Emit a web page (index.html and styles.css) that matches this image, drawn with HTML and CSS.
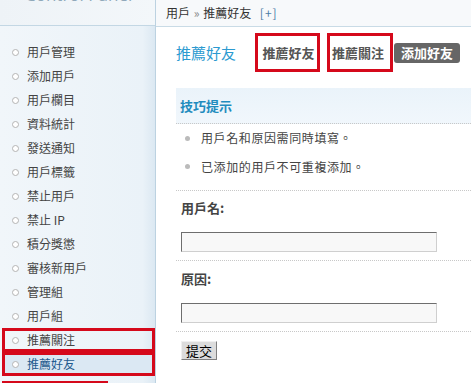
FILE: index.html
```html
<!DOCTYPE html>
<html lang="zh-Hant">
<head>
<meta charset="utf-8">
<title>推薦好友</title>
<link rel="stylesheet" href="styles.css">
</head>
<body>
<div class="page">
  <aside class="sidebar">
    <div class="side-head"><div class="brand">Control Panel</div></div>
    <ul class="nav">
      <li class="nav-item">用戶管理</li>
      <li class="nav-item">添加用戶</li>
      <li class="nav-item">用戶欄目</li>
      <li class="nav-item">資料統計</li>
      <li class="nav-item">發送通知</li>
      <li class="nav-item">用戶標籤</li>
      <li class="nav-item">禁止用戶</li>
      <li class="nav-item">禁止 IP</li>
      <li class="nav-item">積分獎懲</li>
      <li class="nav-item">審核新用戶</li>
      <li class="nav-item">管理組</li>
      <li class="nav-item">用戶組</li>
      <li class="nav-item mark">推薦關注</li>
      <li class="nav-item mark active">推薦好友</li>
    </ul>
    <div class="mark-line"></div>
  </aside>
  <main class="main">
    <div class="crumbs">用戶 <span class="sep">»</span> 推薦好友 <span class="plus">[+]</span></div>
    <div class="content">
      <div class="title-row">
        <h1 class="title">推薦好友</h1>
        <span class="tab mark tab-1">推薦好友</span>
        <span class="tab mark tab-2">推薦關注</span>
        <span class="btn-add">添加好友</span>
      </div>
      <div class="tips">
        <div class="tips-head">技巧提示</div>
        <ul class="tips-list">
          <li>用戶名和原因需同時填寫。</li>
          <li>已添加的用戶不可重複添加。</li>
        </ul>
      </div>
      <div class="field first">
        <div class="label">用戶名:</div>
        <div class="input"></div>
      </div>
      <div class="field">
        <div class="label">原因:</div>
        <div class="input"></div>
      </div>
      <div class="actions"><span class="submit">提交</span></div>
    </div>
  </main>
</div>
</body>
</html>
```
FILE: styles.css
```css
html, body {
  margin: 0;
  padding: 0;
  background: #ffffff;
}
body {
  font-family: "Noto Sans CJK TC", "Noto Sans", sans-serif;
  font-size: 12px;
  color: #444;
  overflow: hidden;
}
.page {
  display: flex;
  width: 471px;
  height: 383px;
  overflow: hidden;
}
.sidebar {
  width: 155px;
  flex: none;
  border-right: 1px solid #bcd2e1;
  background: linear-gradient(to right, #f1f6fa 0, #eaf2f8 92%, #dbe8f2 100%);
  overflow: hidden;
}
.side-head {
  height: 25px;
  border-bottom: 1px solid #c3d7e4;
  background: linear-gradient(to right, #eef3f7, #f3f7fa);
  overflow: hidden;
}
.brand {
  font-family: "Open Sans", "Liberation Sans", sans-serif;
  font-size: 17px;
  line-height: 20px;
  margin-top: -15px;
  padding-left: 25px;
  color: #90a9ba;
}
.nav {
  list-style: none;
  margin: 0;
  padding: 14px 0 0 0;
}
.nav-item {
  height: 24px;
  line-height: 24px;
  margin: 0 0 0 2px;
  padding-left: 25px;
  position: relative;
  color: #444;
  box-sizing: border-box;
}
.nav-item::before {
  content: "";
  position: absolute;
  left: 10px;
  top: 9px;
  width: 5px;
  height: 5px;
  border: 1px solid #b4b4b4;
  border-radius: 50%;
  background: #fff;
}
.mark {
  box-shadow: inset 0 0 0 3px #d5091b;
}
.nav-item.active {
  background: #dbe8f3;
  color: #1e5a8e;
  box-shadow: inset 0 0 0 3px #d5091b;
}
.mark-line {
  margin: 5px 0 0 2px;
  width: 106px;
  height: 2px;
  background: #d5091b;
}
.main {
  flex: 1;
  min-width: 0;
}
.crumbs {
  height: 26px;
  line-height: 25px;
  border-bottom: 1px solid #c9dbe6;
  background: #f7f9fb;
  padding-left: 10px;
  color: #333;
  white-space: nowrap;
}
.sep {
  color: #888;
  margin: 0 1px;
}
.plus {
  color: #4d7ea6;
  margin-left: 6px;
  letter-spacing: 1px;
}
.content {
  padding: 6px 0 0 20px;
}
.title-row {
  display: flex;
  align-items: center;
  height: 39px;
}
.title {
  margin: 0 19px 0 0;
  font-size: 15px;
  font-weight: normal;
  color: #2b9ad0;
  line-height: 20px;
  width: 60px;
  white-space: nowrap;
}
.tab {
  height: 39px;
  line-height: 39px;
  font-size: 13px;
  font-weight: bold;
  color: #555;
  box-sizing: border-box;
  text-align: center;
  white-space: nowrap;
}
.tab-1 {
  width: 65px;
  padding-left: 2px;
  margin-right: 7px;
}
.tab-2 {
  width: 66px;
  padding-right: 4px;
  margin-right: 1px;
}
.btn-add {
  width: 66px;
  height: 20px;
  line-height: 20px;
  background: #666;
  color: #fff;
  font-size: 13px;
  font-weight: bold;
  text-align: center;
  border-radius: 3px;
  white-space: nowrap;
}
.tips {
  margin-top: 16px;
  border-bottom: 1px dotted #c8c8c8;
}
.tips-head {
  height: 35px;
  line-height: 35px;
  padding-left: 4px;
  background: linear-gradient(to bottom, #eaf3fa, #f1f7fc);
  border-bottom: 1px dotted #c8c8c8;
  color: #1f8cbe;
  font-size: 13px;
  font-weight: bold;
}
.tips-list {
  list-style: none;
  margin: 0;
  padding: 0 0 9px 0;
}
.tips-list li {
  position: relative;
  height: 29px;
  line-height: 29px;
  padding-left: 25px;
  color: #444;
  letter-spacing: 0.6px;
}
.tips-list li:first-child {
  height: 28px;
  line-height: 28px;
}
.tips-list li::before {
  content: "";
  position: absolute;
  left: 9px;
  top: 12px;
  width: 5px;
  height: 5px;
  border-radius: 50%;
  background: #bbb;
}
.field {
  padding: 10px 0 8px 5px;
  border-bottom: 1px dotted #c8c8c8;
}
.field + .field {
  padding-top: 11px;
}
.label {
  font-weight: bold;
  font-size: 13px;
  line-height: 14px;
  color: #444;
}
.input {
  margin-top: 17px;
  width: 254px;
  height: 18px;
  background: #f8f8f8;
  border: 1px solid;
  border-color: #6e6e6e #cfcfcf #cfcfcf #6e6e6e;
}
.actions {
  padding: 9px 0 0 5px;
}
.submit {
  display: inline-block;
  width: 34px;
  height: 17px;
  line-height: 17px;
  text-align: center;
  background: #dcdcdc;
  border: 1px solid;
  border-color: #f0f0f0 #808080 #808080 #f0f0f0;
  color: #000;
  font-size: 13px;
}
```
